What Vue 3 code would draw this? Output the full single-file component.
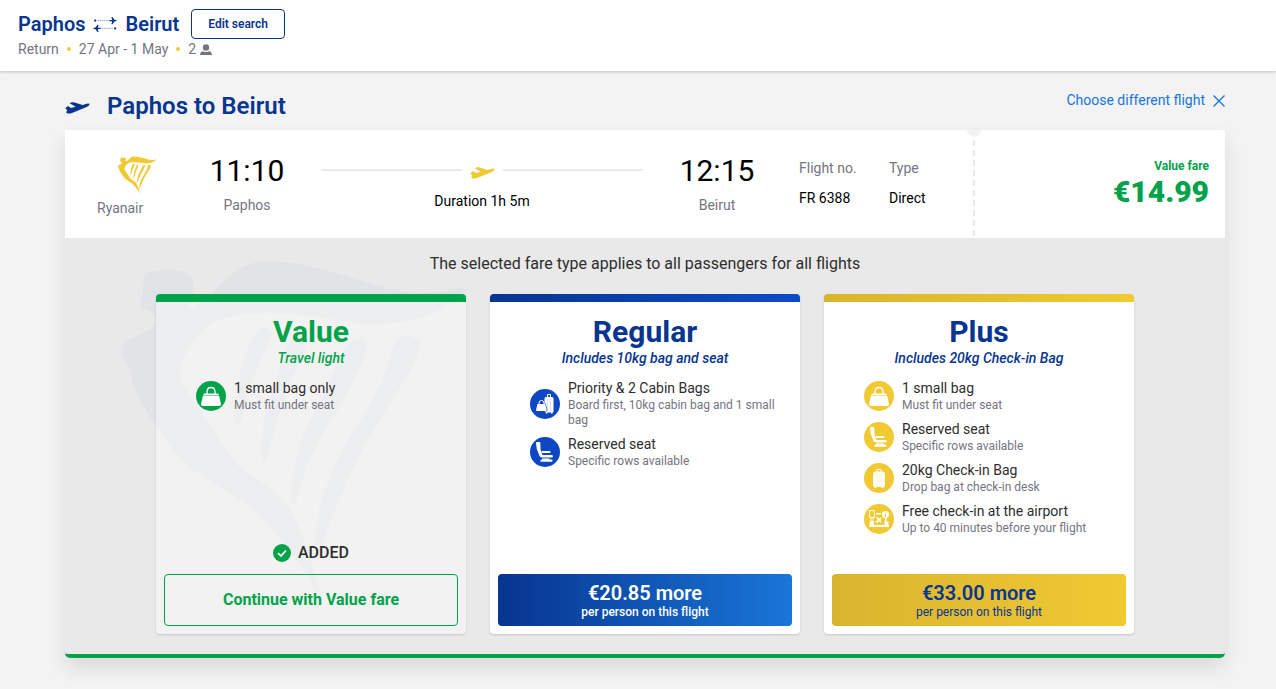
<script setup>
const harp = 'M252 100Q300 80 360 91Q400 100 400 130Q400 160 387 190Q383 205 400 200Q430 185 455 160Q520 80 590 64Q690 55 840 100Q980 145 1060 158Q1130 160 1200 142Q1218 140 1216 156Q1160 200 1090 230Q1000 255 900 250Q800 230 700 222Q620 212 560 220Q500 225 460 245Q395 285 365 365Q350 410 372 440Q430 520 480 600Q535 690 570 705Q640 740 680 790Q730 880 750 955Q770 1020 780 1068Q765 1050 740 1000Q640 860 560 790Q480 740 400 690Q340 640 300 570Q235 490 215 420Q210 380 195 360Q175 335 188 310Q230 285 265 268Q285 255 285 235Q285 215 260 208Q240 208 241 195Q240 170 248 150ZM600 260Q560 300 540 400Q520 480 524 545Q535 560 545 530Q560 440 635 285Q640 262 600 260ZM700 285Q755 270 735 320Q660 480 625 640Q612 690 603 650Q600 560 640 440Q670 330 700 285ZM890 295Q930 285 920 330Q880 440 800 560Q730 680 710 780Q700 800 692 780Q690 700 730 580Q800 440 850 330Q865 300 890 295ZM1010 295Q1050 275 1078 305Q1080 340 1040 410Q980 500 910 620Q840 760 790 900L772 960Q755 900 780 790Q830 640 900 540Q970 430 1000 320Z'
const plane = 'M0 20L4 14Q8 12 12 14L17 18L31 14L13 4Q17 0 25 1L52 9L64 5Q72 3 73 6Q73 10 64 15L22 32Q12 36 5 34Q1 33 4 28L6 24Z'

const fares = [
  {
    id: 'value', name: 'Value', tagline: 'Travel light', added: true,
    action: 'Continue with Value fare',
    items: [{ icon: 'bag', title: '1 small bag only', text: 'Must fit under seat' }],
  },
  {
    id: 'regular', name: 'Regular', tagline: 'Includes 10kg bag and seat',
    action: '€20.85 more', note: 'per person on this flight',
    items: [
      { icon: 'bags', title: 'Priority & 2 Cabin Bags', text: 'Board first, 10kg cabin bag and 1 small bag' },
      { icon: 'seat', title: 'Reserved seat', text: 'Specific rows available' },
    ],
  },
  {
    id: 'plus', name: 'Plus', tagline: 'Includes 20kg Check-in Bag',
    action: '€33.00 more', note: 'per person on this flight',
    items: [
      { icon: 'bag', title: '1 small bag', text: 'Must fit under seat' },
      { icon: 'seat', title: 'Reserved seat', text: 'Specific rows available' },
      { icon: 'case', title: '20kg Check-in Bag', text: 'Drop bag at check-in desk' },
      { icon: 'desk', title: 'Free check-in at the airport', text: 'Up to 40 minutes before your flight' },
    ],
  },
]
</script>

<template>
  <div class="page">
    <header class="top">
      <div class="route">
        <span>Paphos</span>
        <svg class="swap" viewBox="0 0 72 52" aria-hidden="true">
          <g fill="none" stroke="currentColor" stroke-width="3">
            <path d="M14 14H52M20 38H60" stroke-dasharray="3 3" opacity=".6" />
          </g>
          <circle cx="6" cy="14" r="3.500" /><circle cx="67" cy="38" r="3.500" />
          <path d="M50 12L58 12L55.500 3L59 3L65 11.500Q72 12 72 14Q72 16 65 16.500L59 25L55.500 25L58 16L50 16ZM22 36L14 36L16.500 27L13 27L7 35.500Q0 36 0 38Q0 40 7 40.500L13 49L16.500 49L14 40L22 40Z" />
        </svg>
        <span>Beirut</span>
        <button type="button" class="edit">Edit search</button>
      </div>
      <div class="summary">
        <span>Return</span><i class="dot"></i><span>27 Apr - 1 May</span><i class="dot"></i>
        <span class="pax">2
          <svg viewBox="0 0 12 12" aria-hidden="true"><circle cx="6" cy="4.500" r="3.200" /><path d="M0 12Q0 8.500 3.500 8.200Q6 10 8.500 8.200Q12 8.500 12 12Z" /></svg>
        </span>
      </div>
    </header>

    <main class="content">
      <div class="heading">
        <svg class="plane" viewBox="0 0 73 36" aria-hidden="true"><path :d="plane" /></svg>
        <h1>Paphos to Beirut</h1>
        <a href="#" class="change">Choose different flight
          <svg viewBox="0 0 12 12" aria-hidden="true"><path d="M.5.5l11 11M11.500.5l-11 11" fill="none" stroke="currentColor" stroke-width="1.400" /></svg>
        </a>
      </div>

      <div class="panel">
        <section class="flight">
          <div class="journey">
            <div class="airline">
              <svg viewBox="182 62 1036 1010" aria-hidden="true"><path :d="harp" /></svg>
              <span>Ryanair</span>
            </div>
            <div class="stop"><span class="time">11:10</span><span class="city">Paphos</span></div>
            <div class="leg">
              <div class="track"><svg class="plane" viewBox="0 0 73 36" aria-hidden="true"><path :d="plane" /></svg></div>
              <span>Duration 1h 5m</span>
            </div>
            <div class="stop"><span class="time">12:15</span><span class="city">Beirut</span></div>
            <dl class="info number"><dt>Flight no.</dt><dd>FR 6388</dd></dl>
            <dl class="info type"><dt>Type</dt><dd>Direct</dd></dl>
          </div>
          <div class="price"><span>Value fare</span><strong>€14.99</strong></div>
        </section>

        <section class="fares">
          <svg class="watermark" viewBox="182 62 1036 1010" aria-hidden="true"><path :d="harp" /></svg>
          <p class="notice">The selected fare type applies to all passengers for all flights</p>
          <div class="cards">
            <article v-for="fare in fares" :key="fare.id" class="card" :class="fare.id">
              <h2>{{ fare.name }}</h2>
              <p class="tagline">{{ fare.tagline }}</p>
              <ul>
                <li v-for="item in fare.items" :key="item.title">
                  <span class="icon">
                    <svg v-if="item.icon === 'bag'" viewBox="0 0 30 30" aria-hidden="true">
                      <path d="M11 13V11Q11 6.500 15 6.500Q19 6.500 19 11V13" fill="none" stroke="#fff" stroke-width="1.300" />
                      <path d="M8 12.500H22L22.800 14H7.200ZM7 14.600H23L25 23Q25 25 23 25H7Q5 25 5 23Z" />
                    </svg>
                    <svg v-else-if="item.icon === 'bags'" viewBox="0 0 30 30" aria-hidden="true">
                      <path d="M17.500 8.500V5.500H20.500V8.500" fill="none" stroke="#fff" />
                      <path d="M16 8H22Q23.500 8 23.500 9.500V22.500Q23.500 23.500 22.500 23.500V24.500H21V23.500H17.500V24.500H16V23.500Q14.500 23.500 14.500 22V9.500Q14.500 8 16 8Z" />
                      <path class="crease" d="M17.500 10V22M20.500 10V22" />
                      <path class="outline" d="M7.500 15H15.200L16.800 21Q16.800 22 16 22H7Q6 22 6 21Z" />
                      <path d="M9 15.500V14Q9 11.500 11.500 11.500Q14 11.500 14 14V15.500" fill="none" stroke="#fff" />
                    </svg>
                    <svg v-else-if="item.icon === 'seat'" viewBox="0 0 30 30" aria-hidden="true">
                      <path d="M6 6Q6 5 7 5H9.500Q10.300 5 10.300 6L10.600 12.500L12.500 18H21.500Q23 18 23 19.300Q23 20.500 21.500 20.500H12Q10 20.500 9.300 18.500L6.800 12Z" />
                      <path d="M11.500 14H19.500Q20.500 14 20.500 15Q20.500 16 19.500 16H12.200ZM12 21.500H19.500V22.500H22Q22.500 22.500 22.500 23.500Q22.500 24.700 21.500 24.700H10.500V22.700H12Z" />
                    </svg>
                    <svg v-else-if="item.icon === 'case'" viewBox="0 0 30 30" aria-hidden="true">
                      <path d="M13 9V6.500H17V9" fill="none" stroke="#fff" />
                      <path d="M11.500 8.500H18.500Q21 8.500 21 11V22Q21 24 19.500 24V25H17.500V24H12.500V25H10.500V24Q9 24 9 22V11Q9 8.500 11.500 8.500Z" opacity=".92" />
                    </svg>
                    <svg v-else viewBox="0 0 30 30" aria-hidden="true">
                      <path d="M5.600 6.600H10.400V13.400H5.600ZM7 13.500V18H9V13.500" fill="none" stroke="#fff" />
                      <path d="M5.500 17.500H10V21H20.500V17.500H24.500V21.500H25V23H5V21.500H5.500ZM12 9H17V10.500H12ZM20.800 13.500H22.500V18H20.800Z" />
                      <path d="M12 13.200L13.200 13L15 14.600L17 13.400Q18.200 13.200 17.500 14.400L16.300 16L17.500 18.400L17 19L14.900 17.200L13.700 18.200V19.300L13 19.500L12.400 18.300L11.300 17.600L11.600 17H12.900L13.800 15.800Z" />
                      <circle cx="21.500" cy="10.500" r="3.500" /><path class="mark" d="M21 8.200H22V9.200H21ZM21 10H22V13H21Z" />
                    </svg>
                  </span>
                  <div><strong>{{ item.title }}</strong><small>{{ item.text }}</small></div>
                </li>
              </ul>
              <div v-if="fare.added" class="added">
                <svg viewBox="0 0 18 18" aria-hidden="true"><circle cx="9" cy="9" r="9" /><path d="M5 9.200L8 12L13 6.500" fill="none" stroke="#fff" stroke-width="1.800" /></svg>
                ADDED
              </div>
              <button type="button" class="choose"><b>{{ fare.action }}</b><span v-if="fare.note">{{ fare.note }}</span></button>
            </article>
          </div>
        </section>
      </div>
    </main>
  </div>
</template>

<style>
body { background: #f3f3f3; }
</style>

<style scoped>
* { box-sizing: border-box; }
.page { font-family: Roboto, Arial, sans-serif; font-size: 14px; line-height: 20px; color: #2e2e2e; }
h1, h2, p, ul, dl, dd { margin: 0; padding: 0; }
button { font-family: inherit; cursor: pointer; }
svg { fill: currentColor; flex: none; }

.top { background: #fff; padding: 9px 18px 12px; box-shadow: 0 1px 3px rgba(0, 0, 0, .2); }
.route { display: flex; align-items: center; color: #073590; font-size: 20px; font-weight: 600; line-height: 30px; }
.swap { width: 24px; height: 17px; margin: 0 8px; }
.edit { height: 30px; margin-left: 12px; padding: 0 16px; border: 1px solid #073590; border-radius: 4px; background: #fff; color: #073590; font-size: 12px; font-weight: 600; }
.summary { display: flex; align-items: center; color: #75757f; }
.dot { width: 4px; height: 4px; margin: 0 8px; border-radius: 50%; background: #f1c933; }
.pax { display: flex; align-items: center; gap: 4px; }
.pax svg { width: 12px; height: 12px; }

.content { padding: 19px 51px 31px 65px; }
.heading { display: flex; align-items: flex-start; color: #073590; padding-bottom: 8px; }
.plane { width: 25px; height: 12px; }
.heading .plane { margin-top: 12px; }
h1 { margin-left: 17px; font-size: 24px; font-weight: 600; line-height: 32px; }
.change { display: flex; align-items: center; gap: 8px; margin-left: auto; color: #1976d8; text-decoration: none; }
.change svg { width: 12px; height: 12px; margin-top: 2px; }

.panel { border-radius: 0 0 5px 5px; box-shadow: 0 10px 20px rgba(0, 0, 0, .1); }
.flight { display: flex; background: #fff; }
.journey { flex: 1; display: flex; align-items: flex-start; padding: 22px 0 20px 32px; }
.airline { width: 76px; padding-top: 4px; color: #75757f; }
.airline svg { display: block; width: 38px; height: 38px; margin: 0 0 4px 21px; color: #f1c933; }
.stop { width: 148px; text-align: center; }
.stop span { display: block; }
.time { font-size: 30px; line-height: 38px; color: #000; }
.city { margin-top: 5px; color: #75757f; }
.leg { flex: 1; text-align: center; color: #000; }
.track { display: flex; align-items: center; gap: 8px; height: 36px; margin-bottom: 3px; color: #f1c933; }
.track .plane { margin-top: 5px; }
.track::before, .track::after { content: ""; flex: 1; height: 2px; background: #e9e9e9; }
.info { padding-top: 6px; }
.number { width: 98px; padding-left: 8px; }
.type { width: 84px; }
.info dt { color: #75757f; }
.info dd { margin-top: 10px; color: #000; }
.price { position: relative; width: 252px; padding: 28px 16px 0; text-align: right; color: #00a34a; font-weight: 700; }
.price::before { content: ""; position: absolute; left: 0; top: 10px; bottom: 0; width: 2px; background: repeating-linear-gradient(#e9e9e9 0 6px, transparent 6px 10px); }
.price::after { content: ""; position: absolute; left: -6px; top: 0; width: 14px; height: 7px; border-radius: 0 0 7px 7px; background: #f3f3f3; }
.price span, .price strong { display: block; }
.price span { font-size: 12px; line-height: 16px; }
.price strong { font-size: 30px; line-height: 36px; }

.fares { position: relative; padding: 16px 20px 20px; background: #e9e9e9; border-bottom: 4px solid #00a34a; border-radius: 0 0 5px 5px; }
.watermark { position: absolute; left: 56px; top: 23px; width: 345px; height: 337px; color: #e1e3e6; }
.notice { position: relative; font-size: 16px; text-align: center; margin-bottom: 20px; }
.cards { position: relative; display: grid; grid-template-columns: repeat(3, minmax(0, 310px)); justify-content: center; gap: 24px; }
.card { --accent: #00a34a; --ink: #073590; display: flex; flex-direction: column; min-height: 340px; padding: 21px 8px 8px; border-radius: 4px; box-shadow: 0 1px 2px rgba(0, 0, 0, .15); }
.value { --ink: #00a34a; background: linear-gradient(#00a34a, #00a34a) top / 100% 8px no-repeat rgba(255, 255, 255, .4); }
.regular { --accent: #0d47c4; background: linear-gradient(90deg, #073590, #0d4cc7) top / 100% 8px no-repeat #fff; }
.plus { --accent: #f1c933; background: linear-gradient(90deg, #d9b42e, #f1c933) top / 100% 8px no-repeat #fff; }
h2 { color: var(--ink); font-size: 30px; font-weight: 700; line-height: 34px; text-align: center; }
.tagline { color: var(--ink); font-style: italic; font-weight: 500; text-align: center; line-height: 18px; margin-bottom: 12px; }
ul { list-style: none; flex: 1; padding: 0 8px 0 32px; }
li { display: flex; align-items: center; gap: 8px; margin-bottom: 7px; }
.icon { flex: none; width: 30px; height: 30px; border-radius: 50%; background: var(--accent); color: #fff; }
.icon svg { display: block; width: 30px; height: 30px; }
.icon .mark { fill: var(--accent); }
.icon .crease { fill: none; stroke: var(--accent); stroke-width: .5; opacity: .35; }
.icon .outline { stroke: var(--accent); paint-order: stroke; stroke-width: 1.2; }
li strong, li small { display: block; }
li strong { font-size: 14px; font-weight: 400; line-height: 19px; }
li small { font-size: 12px; line-height: 15px; color: #75757f; }
.added { display: flex; justify-content: center; align-items: center; gap: 7px; margin-bottom: 11px; font-size: 16px; font-weight: 500; }
.added svg { width: 18px; height: 18px; color: #00a34a; }
.choose { display: flex; flex-direction: column; align-items: center; justify-content: center; height: 52px; padding: 4px 0 0; border: 0; border-radius: 4px; color: #fff; }
.choose b { font-size: 20px; font-weight: 600; line-height: 20px; }
.choose span { font-size: 12px; line-height: 18px; }
.value .choose { padding: 0; border: 1px solid #00a34a; background: transparent; color: #00a34a; }
.value .choose b { font-size: 16px; font-weight: 700; }
.regular .choose { background: linear-gradient(90deg, #073590, #1976d8); }
.regular .choose span { font-weight: 500; }
.plus .choose { background: linear-gradient(90deg, #d9b42e, #f1c933); color: #073590; }
</style>
